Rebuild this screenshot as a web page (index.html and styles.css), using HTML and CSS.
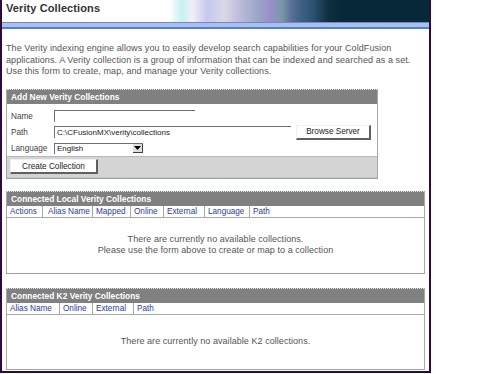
FILE: index.html
```
<!DOCTYPE html>
<html>
<head>
<meta charset="utf-8">
<link rel="stylesheet" href="styles.css">
</head>
<body>
<div class="frame">
  <div class="titlebar"><span class="title">Verity Collections</span></div>
  <div class="bluebar"></div>
  <p class="intro">The Verity indexing engine allows you to easily develop search capabilities for your ColdFusion applications. A Verity collection is a group of information that can be indexed and searched as a set. Use this form to create, map, and manage your Verity collections.</p>

  <div class="panel add">
    <div class="phead">Add New Verity Collections</div>
    <div class="form">
      <div class="row"><span class="label">Name</span><span class="input name"></span></div>
      <div class="row"><span class="label">Path</span><span class="input path">C:\CFusionMX\verity\collections</span><span class="btn browse">Browse Server</span></div>
      <div class="row"><span class="label">Language</span><span class="select"><span class="seltext">English</span><span class="arrow"><svg width="7" height="4" viewBox="0 0 7 4"><path d="M0 0H7L3.5 4Z" fill="#000"/></svg></span></span></div>
    </div>
    <div class="pfoot"><span class="btn create">Create Collection</span></div>
  </div>

  <div class="panel list local">
    <div class="phead">Connected Local Verity Collections</div>
    <div class="cols">
      <span class="col c-actions">Actions</span>
      <span class="col c-alias">Alias Name</span>
      <span class="col c-mapped">Mapped</span>
      <span class="col c-online">Online</span>
      <span class="col c-external">External</span>
      <span class="col c-language">Language</span>
      <span class="col c-path">Path</span>
    </div>
    <div class="pbody">
      <div>There are currently no available collections.</div>
      <div>Please use the form above to create or map to a collection</div>
    </div>
  </div>

  <div class="panel list k2">
    <div class="phead">Connected K2 Verity Collections</div>
    <div class="cols">
      <span class="col c-alias2">Alias Name</span>
      <span class="col c-online2">Online</span>
      <span class="col c-external2">External</span>
      <span class="col c-path">Path</span>
    </div>
    <div class="pbody short">
      <div>There are currently no available K2 collections.</div>
    </div>
  </div>
</div>
</body>
</html>
```
FILE: styles.css
```
html, body {
  margin: 0;
  padding: 0;
  background: #fff;
}
body {
  font-family: "Liberation Sans", Arial, sans-serif;
  color: #444;
}
.frame {
  width: 427px;
  height: 371px;
  border-left: 2px solid #2c0a3c;
  border-right: 2px solid #2c0a3c;
  border-bottom: 2px solid #2c0a3c;
  display: flex;
  flex-direction: column;
  box-sizing: content-box;
}
.frame > * {
  flex-shrink: 0;
}
.titlebar {
  height: 22px;
  box-sizing: border-box;
  padding-top: 2px;
  display: flex;
  align-items: flex-start;
  background: linear-gradient(to right,
    #ffffff 0, #ffffff 168px,
    #e8fafa 172px, #c8f0f0 180px,
    #f0f0f8 190px, #c8c8ee 205px,
    #d8d8e8 222px, #b8b8d8 240px,
    #9aa8c8 255px, #9a90c8 268px,
    #7898a8 280px, #5a6c98 290px,
    #3c6080 300px, #2a5070 312px,
    #10303e 326px, #062838 340px, #062838 100%);
}
.title {
  font-weight: bold;
  font-size: 11px;
  line-height: 13px;
  color: #333;
  padding-left: 4px;
  letter-spacing: 0.1px;
}
.bluebar {
  height: 4px;
  background: #a8c0f0;
  border-top: 1px solid #7088d0;
  border-bottom: 2px solid #5d7cc4;
}
.intro {
  margin: 14px 0 0 0;
  padding: 0 4px;
  font-size: 9px;
  line-height: 11.5px;
  letter-spacing: 0.08px;
  color: #555;
}
.panel {
  margin-left: 4px;
  border-left: 1px solid #a8a8a8;
  border-right: 1px solid #a8a8a8;
  border-bottom: 1px solid #a0a0a0;
  display: flex;
  flex-direction: column;
}
.add {
  width: 370px;
  margin-top: 11px;
}
.phead {
  background: #808080;
  color: #fff;
  font-weight: bold;
  font-size: 8.4px;
  height: 14px;
  line-height: 14px;
  padding-left: 4px;
  border-top: 1px dotted #d8e8e8;
}
.form {
  display: flex;
  flex-direction: column;
  padding: 6px 0 1px 0;
  gap: 3px;
}
.row {
  display: flex;
  align-items: center;
  height: 13px;
  font-size: 8.2px;
  color: #444;
}
.label {
  width: 47px;
  padding-left: 4px;
  box-sizing: border-box;
}
.input {
  height: 12px;
  border-top: 1px solid #707070;
  border-left: 1px solid #707070;
  box-sizing: border-box;
  font-size: 8px;
  line-height: 11px;
  padding-left: 2px;
  color: #222;
}
.name { width: 141px; }
.path { width: 237px; }
.btn {
  display: inline-flex;
  align-items: center;
  justify-content: center;
  background: #fff;
  border-top: 1px solid #f0f0f0;
  border-left: 1px solid #f0f0f0;
  border-right: 2px solid #606060;
  border-bottom: 2px solid #606060;
  box-sizing: border-box;
  font-size: 8.2px;
  color: #222;
}
.browse {
  width: 75px;
  height: 15px;
  margin-left: 5px;
}
.select {
  width: 89px;
  height: 11px;
  border-top: 1px solid #707070;
  border-left: 1px solid #707070;
  box-sizing: border-box;
  display: flex;
  align-items: center;
  justify-content: space-between;
  font-size: 8px;
  color: #222;
}
.seltext { padding-left: 2px; }
.arrow {
  width: 10px;
  height: 9px;
  display: flex;
  align-items: center;
  justify-content: center;
  background: #e0e0e0;
  border-right: 1px solid #404040;
  border-bottom: 1px solid #404040;
  box-sizing: border-box;
}
.pfoot {
  background: #d4d4d4;
  height: 20px;
  display: flex;
  align-items: center;
  padding-left: 3px;
  border-top: 1px solid #b8b8b8;
  border-bottom: 1px dotted #a8c8c8;
}
.create {
  width: 88px;
  height: 15px;
}
.list {
  width: 417px;
}
.local { margin-top: 12px; }
.k2 { margin-top: 14px; }
.cols {
  display: flex;
  height: 11px;
  border-bottom: 1px solid #a8a8a8;
  font-size: 8.2px;
  color: #2a3ca8;
}
.col {
  display: flex;
  align-items: center;
  padding-left: 3px;
  border-right: 1px solid #a8a8a8;
  box-sizing: border-box;
}
.c-actions { width: 36px; }
.c-alias { width: 50px; padding-left: 5px; }
.c-mapped { width: 38px; }
.c-online { width: 33px; }
.c-external { width: 41px; }
.c-language { width: 45px; }
.c-path { border-right: none; flex: 1; }
.c-alias2 { width: 53px; }
.c-online2 { width: 33px; }
.c-external2 { width: 41px; }
.pbody {
  height: 55px;
  display: flex;
  flex-direction: column;
  align-items: center;
  justify-content: center;
  font-size: 9px;
  line-height: 11.5px;
  letter-spacing: 0.05px;
  color: #555;
}
.pbody.short {
  height: 54px;
}
```
